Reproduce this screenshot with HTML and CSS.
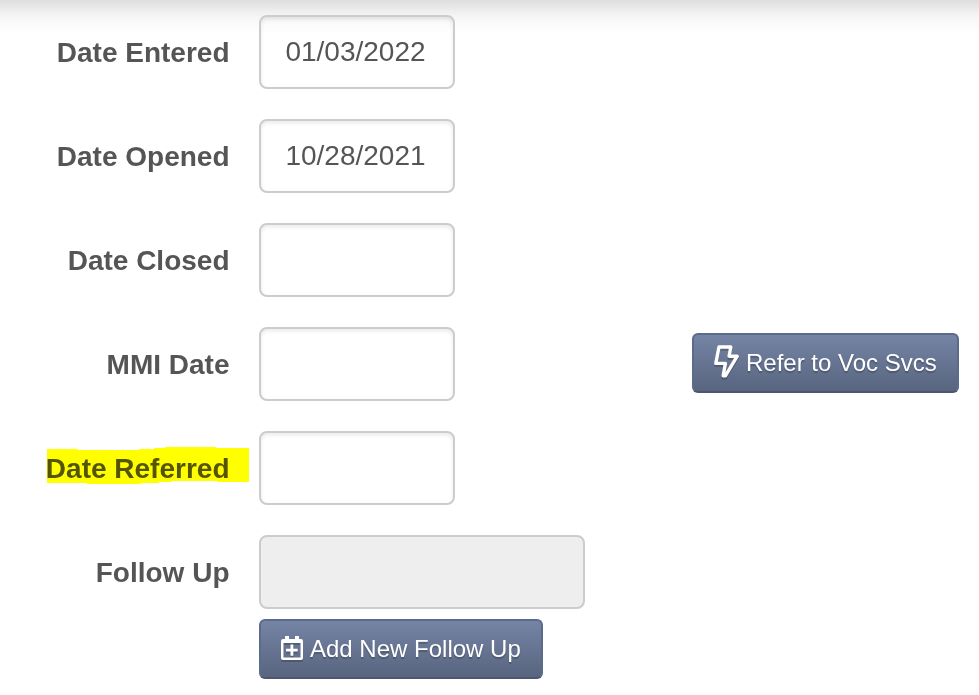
FILE: index.html
```html
<!DOCTYPE html>
<html lang="en">
<head>
<meta charset="utf-8">
<title>Case Dates</title>
<link rel="stylesheet" href="styles.css">
</head>
<body>
<form class="form">
  <div class="row">
    <label class="label" for="entered">Date Entered</label>
    <input class="field" id="entered" type="text" value="01/03/2022">
  </div>
  <div class="row">
    <label class="label" for="opened">Date Opened</label>
    <input class="field" id="opened" type="text" value="10/28/2021">
  </div>
  <div class="row">
    <label class="label" for="closed">Date Closed</label>
    <input class="field" id="closed" type="text">
  </div>
  <div class="row">
    <label class="label" for="mmi">MMI Date</label>
    <input class="field" id="mmi" type="text">
    <button class="button button-refer" type="button">
      <svg class="icon-bolt" width="26" height="34" viewBox="0 0 26 34"><path d="M5 2H16.8L15.1 11.2H23.2L11.4 30.8H9.2L11.4 18.4H1.8Z"/></svg>
      <span>Refer to Voc Svcs</span>
    </button>
  </div>
  <div class="row">
    <label class="label marked" for="referred">Date Referred
      <svg class="marker" width="202" height="37" viewBox="0 0 202 37"><path d="M0 2H31V3H92V2H107V1H118V0H169V1H202V35H170V34H125V35H112V36H94V37H40V36H0Z"/></svg>
    </label>
    <input class="field" id="referred" type="text">
  </div>
  <div class="row">
    <label class="label" for="follow">Follow Up</label>
    <input class="field field-wide" id="follow" type="text" disabled>
  </div>
  <div class="actions">
    <button class="button button-add" type="button">
      <svg class="icon-calendar" width="22" height="24" viewBox="0 0 22 24"><path fill-rule="evenodd" d="M4 0H8V3H14V0H18V3H20Q22 3 22 5V22Q22 24 20 24H2Q0 24 0 22V5Q0 3 2 3H4ZM2.5 7V21.5H19.5V7ZM9.5 8.5H12.3V12.7H16.7V15.5H12.3V19.7H9.5V15.5H5V12.7H9.5Z"/></svg>
      <span>Add New Follow Up</span>
    </button>
  </div>
</form>
</body>
</html>
```
FILE: styles.css
```css
* {
  box-sizing: border-box;
}

body {
  margin: 0;
  height: 695px;
  overflow: hidden;
  background: #fff linear-gradient(#dedede 0, #e5e5e5 5px, #f1f1f1 13px, #fafafa 22px, #fff 34px) no-repeat 0 0 / 100% 34px;
  color: #555;
  font-family: "Liberation Sans", Arial, sans-serif;
}

.form {
  display: flex;
  flex-direction: column;
  gap: 30px;
  padding: 15px 20px 0 0;
}

.row {
  display: flex;
  align-items: center;
  height: 74px;
}

.label {
  width: 229.5px;
  margin-right: 29.5px;
  padding-top: 2px;
  font-size: 28px;
  font-weight: bold;
  line-height: 40px;
  text-align: right;
  white-space: nowrap;
}

.marked {
  position: relative;
}

.marker {
  position: absolute;
  left: 47px;
  top: 0;
  fill: #ff0;
  mix-blend-mode: multiply;
}

.field {
  width: 196px;
  height: 74px;
  padding: 0 11px 0 8px;
  border: 2px solid #ccc;
  border-radius: 8px;
  background: transparent;
  box-shadow: inset 0 2px 4px rgba(0, 0, 0, 0.09);
  color: #555;
  font: 28px "Liberation Sans", Arial, sans-serif;
  text-align: center;
}

.field-wide {
  width: 326px;
  background: #eee;
  box-shadow: none;
}

.button {
  display: flex;
  align-items: center;
  height: 60px;
  padding: 0 20px;
  border: 2px solid #5d6b8a;
  border-bottom-color: #4b566f;
  border-radius: 6px;
  background: linear-gradient(#7584a5, #58657f);
  color: #fff;
  font: 24px/30px "Liberation Sans", Arial, sans-serif;
  text-shadow: 0 2px 1px rgba(0, 0, 0, 0.22);
  white-space: nowrap;
}

.button svg {
  flex: none;
  filter: drop-shadow(0 2px 0.5px rgba(0, 0, 0, 0.2));
}

.button-refer {
  width: 267px;
  margin: -2px 0 0 auto;
}

.icon-bolt {
  margin: -2px 6px 0 0;
  fill: none;
  stroke: #fff;
  stroke-width: 3.4;
  stroke-linejoin: round;
}

.actions {
  margin: -20px 0 0 259px;
}

.button-add {
  width: 284px;
}

.icon-calendar {
  margin: -2px 7px 0 0;
  fill: #fff;
}
```
